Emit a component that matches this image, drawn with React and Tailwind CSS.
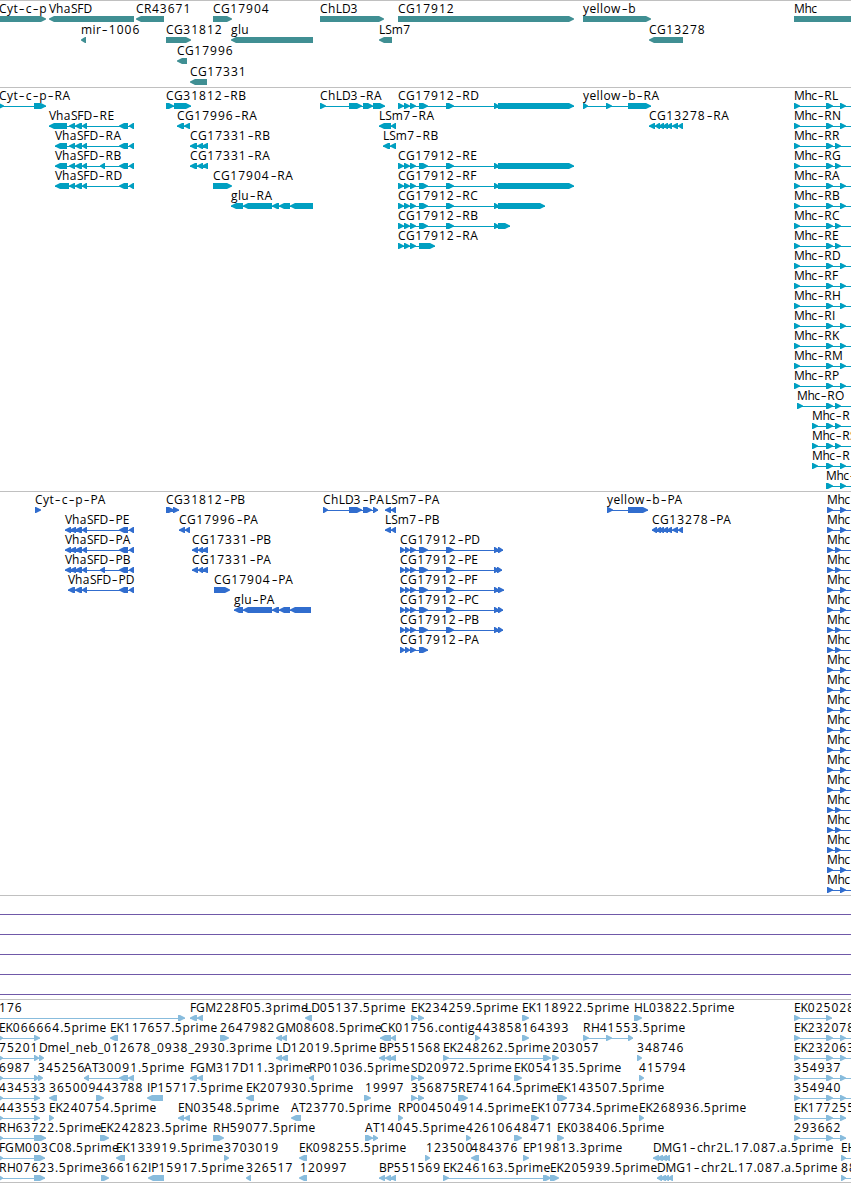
import clsx from "clsx";

// Feature: [label, x, strand, [[start, end], ...]]
// A block that starts past the right edge keeps the intron line running off screen.
const OFF = [900, 910];

const genes = [
  [
    ["Cyt-c-p", -1, "+", [[-20, 46]]],
    ["VhaSFD", 49, "-", [[49, 134]]],
    ["CR43671", 136, "-", [[136, 164]]],
    ["CG17904", 213, "+", [[213, 232]]],
    ["ChLD3", 320, "+", [[320, 384]]],
    ["CG17912", 398, "+", [[398, 574]]],
    ["yellow-b", 583, "+", [[583, 651]]],
    ["Mhc", 794, "+", [[794, 900]]],
  ],
  [
    ["mir-1006", 81, "-", [[81, 86]]],
    ["CG31812", 166, "+", [[166, 191]]],
    ["glu", 231, "-", [[231, 313]]],
    ["LSm7", 379, "-", [[379, 392]]],
    ["CG13278", 649, "-", [[649, 683]]],
  ],
  [["CG17996", 177, "-", [[177, 187]]]],
  [["CG17331", 190, "-", [[190, 207]]]],
];

const vhaTail = [[69, 75], [75, 82], [82, 87], [119, 128], [129, 134]];
const vhaTailB = [[69, 75], [75, 82], [82, 87], [100, 105], [119, 128], [129, 134]];
const cgHead = [[398, 404], [404, 410], [410, 416], [419, 428], [446, 454], [494, 499]];
const mhc = (name, x, third) => [name, x, "+", [[x, x + 6], [826, 833], [third, third + 6], OFF]];

const transcripts = [
  [
    ["Cyt-c-p-RA", -1, "+", [[-2, 4], [34, 46]]],
    ["CG31812-RB", 166, "+", [[166, 174], [174, 191]]],
    ["ChLD3-RA", 320, "+", [[320, 326], [349, 362], [363, 373], [373, 385]]],
    ["CG17912-RD", 398, "+", [...cgHead, [498, 574]]],
    ["yellow-b-RA", 583, "+", [[583, 588], [606, 612], [628, 651]]],
    mhc("Mhc-RL", 794, 840),
  ],
  [
    ["VhaSFD-RE", 49, "-", [[49, 67], ...vhaTail]],
    ["CG17996-RA", 177, "-", [[177, 184], [184, 190]]],
    ["LSm7-RA", 379, "-", [[379, 391], [391, 396]]],
    ["CG13278-RA", 649, "-", [[649, 655], [655, 660], [659, 664], [663, 668], [667, 672], [672, 678], [678, 683]]],
    mhc("Mhc-RN", 794, 840),
  ],
  [
    ["VhaSFD-RA", 55, "-", [[55, 67], ...vhaTail]],
    ["CG17331-RB", 190, "-", [[190, 197], [197, 203], [202, 208]]],
    ["LSm7-RB", 383, "-", [[383, 390], [390, 396]]],
    mhc("Mhc-RR", 794, 835),
  ],
  [
    ["VhaSFD-RB", 55, "-", [[55, 67], ...vhaTailB]],
    ["CG17331-RA", 190, "-", [[190, 197], [197, 203], [202, 208]]],
    ["CG17912-RE", 398, "+", [...cgHead, [498, 574]]],
    mhc("Mhc-RG", 794, 835),
  ],
  [
    ["VhaSFD-RD", 55, "-", [[55, 69], ...vhaTail]],
    ["CG17904-RA", 213, "+", [[213, 232]]],
    ["CG17912-RF", 398, "+", [...cgHead, [498, 574]]],
    mhc("Mhc-RA", 794, 840),
  ],
  [
    ["glu-RA", 231, "-", [[231, 243], [243, 272], [272, 279], [279, 290], [290, 313]]],
    ["CG17912-RC", 398, "+", [...cgHead, [498, 545]]],
    mhc("Mhc-RB", 794, 840),
  ],
  [["CG17912-RB", 398, "+", [...cgHead, [498, 510]]], mhc("Mhc-RC", 794, 835)],
  [
    ["CG17912-RA", 398, "+", [[398, 404], [404, 410], [410, 416], [419, 435]]],
    mhc("Mhc-RE", 794, 835),
  ],
  [mhc("Mhc-RD", 794, 840)],
  [mhc("Mhc-RF", 794, 840)],
  [mhc("Mhc-RH", 794, 840)],
  [mhc("Mhc-RI", 794, 840)],
  [mhc("Mhc-RK", 794, 840)],
  [mhc("Mhc-RM", 794, 840)],
  [mhc("Mhc-RP", 794, 840)],
  [mhc("Mhc-RO", 797, 835)],
  [mhc("Mhc-R", 812, 835)],
  [mhc("Mhc-RS", 812, 835)],
  [mhc("Mhc-R", 812, 840)],
  [["Mhc-", 826, "+", [[826, 833], [840, 846], OFF]]],
];

const vhaP = [[65, 71], [70, 76], [75, 82], [82, 87], [119, 128], [129, 134]];
const vhaPB = [[65, 71], [70, 76], [75, 82], [82, 87], [100, 105], [119, 128], [129, 134]];
const cgP = [[400, 405], [405, 410], [410, 416], [419, 428], [446, 454], [494, 499]];
const mhcP = (second) => ["Mhc", 827, "+", [[827, 833], [second, second + 6], OFF]];

const proteins = [
  [
    ["Cyt-c-p-PA", 35, "+", [[35, 41]]],
    ["CG31812-PB", 166, "+", [[166, 174], [173, 179]]],
    ["ChLD3-PA", 323, "+", [[323, 328], [349, 362], [363, 372], [373, 378]]],
    ["LSm7-PA", 385, "-", [[385, 391], [391, 396]]],
    ["yellow-b-PA", 607, "+", [[607, 613], [628, 648]]],
    mhcP(840),
  ],
  [
    ["VhaSFD-PE", 65, "-", vhaP],
    ["CG17996-PA", 179, "-", [[179, 185], [185, 190]]],
    ["LSm7-PB", 385, "-", [[385, 391], [391, 396]]],
    ["CG13278-PA", 652, "-", [[652, 657], [656, 661], [659, 664], [663, 668], [667, 672], [672, 678], [678, 683]]],
    mhcP(840),
  ],
  [
    ["VhaSFD-PA", 65, "-", vhaP],
    ["CG17331-PB", 192, "-", [[192, 198], [198, 203], [202, 208]]],
    ["CG17912-PD", 400, "+", [...cgP, [498, 503]]],
    mhcP(835),
  ],
  [
    ["VhaSFD-PB", 65, "-", vhaPB],
    ["CG17331-PA", 192, "-", [[192, 198], [198, 203], [202, 208]]],
    ["CG17912-PE", 400, "+", [...cgP, [497, 502]]],
    mhcP(835),
  ],
  [
    ["VhaSFD-PD", 68, "-", [[68, 75], ...vhaP.slice(2)]],
    ["CG17904-PA", 214, "+", [[214, 230]]],
    ["CG17912-PF", 400, "+", [...cgP, [498, 504]]],
    mhcP(840),
  ],
  [
    ["glu-PA", 234, "-", [[234, 243], [243, 272], [272, 279], [279, 290], [290, 311]]],
    ["CG17912-PC", 400, "+", [...cgP, [498, 503]]],
    mhcP(840),
  ],
  [["CG17912-PB", 400, "+", [...cgP, [498, 503]]], mhcP(835)],
  [["CG17912-PA", 400, "+", cgP.slice(0, 4)], mhcP(835)],
  ...[840, 840, 840, 840, 840, 840, 840, 835, 835, 835, 840, 840].map((x) => [mhcP(x)]),
];

const pair = [[411, 417], [418, 424]];
const three = [[794, 800], [826, 833], [840, 846]];

const ests = [
  [
    ["176", -1, "+", [[-20, -5], [178, 185]]],
    ["FGM228F05.3prime", 190, "-", [[190, 197], [197, 203]]],
    ["LD05137.5prime", 305, "-", [[305, 312]]],
    ["EK234259.5prime", 411, "+", pair],
    ["EK118922.5prime", 522, "+", [[522, 529]]],
    ["HL03822.5prime", 634, "+", [[634, 642]]],
    ["EK025028", 794, "+", [[794, 800], [826, 832]]],
  ],
  [
    ["EK066664.5prime", -1, "+", [[-2, 3], [34, 40]]],
    ["EK117657.5prime", 110, "-", [[110, 118]]],
    ["2647982", 220, "+", [[220, 229]]],
    ["GM08608.5prime", 276, "-", [[276, 282], [281, 287]]],
    ["CK01756.contig", 380, "-", [[380, 391], [391, 396]]],
    ["443858", 475, "+", [[475, 480]]],
    ["164393", 522, "+", [[522, 529]]],
    ["RH41553.5prime", 583, "+", [[583, 589], [606, 612], [628, 633]]],
    ["EK232078", 794, "+", [...three, OFF]],
  ],
  [
    ["75201", -1, "+", [[-2, 3], [34, 39]]],
    ["Dmel_neb_012678_0938_2930.3prime", 39, "+", [[39, 44]]],
    ["LD12019.5prime", 276, "-", [[276, 282], [281, 288]]],
    ["BP551568", 379, "-", [[379, 385], [385, 391], [390, 396]]],
    ["EK248262.5prime", 443, "+", [[443, 449], [543, 551]]],
    ["203057", 552, "+", [[552, 559]]],
    ["348746", 637, "+", [[637, 642]]],
    ["EK232063", 794, "+", [...three, OFF]],
  ],
  [
    ["6987", -1, "+", [[-2, 3], [34, 39]]],
    ["345256", 38, "+", [[38, 43]]],
    ["AT30091.5prime", 84, "-", [[84, 89], [119, 128], [128, 134]]],
    ["FGM317D11.3prime", 190, "-", [[190, 197], [197, 203]]],
    ["RP01036.5prime", 309, "-", [[309, 314]]],
    ["SD20972.5prime", 411, "+", pair],
    ["EK054135.5prime", 514, "+", [[514, 522]]],
    ["415794", 639, "+", [[639, 644]]],
    ["354937", 794, "+", [...three, OFF]],
  ],
  [
    ["434533", -1, "+", [[-2, 3], [34, 40]]],
    ["365009", 49, "-", [[49, 57]]],
    ["443788", 96, "+", [[96, 104]]],
    ["IP15717.5prime", 147, "-", [[147, 163]]],
    ["EK207930.5prime", 246, "-", [[246, 254]]],
    ["19997", 365, "+", [[364, 371]]],
    ["356875", 411, "+", pair],
    ["RE74164.5prime", 458, "+", [[458, 468]]],
    ["EK143507.5prime", 557, "+", [[557, 567]]],
    ["354940", 794, "+", [...three, OFF]],
  ],
  [
    ["443553", -1, "+", [[-2, 3], [34, 40]]],
    ["EK240754.5prime", 49, "+", [[49, 54]]],
    ["EN03548.5prime", 178, "-", [[178, 184], [184, 190]]],
    ["AT23770.5prime", 291, "-", [[291, 301]]],
    ["RP004504914.5prime", 398, "+", [[398, 403]]],
    ["EK107734.5prime", 531, "+", [[531, 539]]],
    ["EK268936.5prime", 639, "+", [[639, 644]]],
    ["EK177255", 794, "+", three],
  ],
  [
    ["RH63722.5prime", -1, "+", [[-2, 3], [34, 46]]],
    ["EK242823.5prime", 100, "+", [[100, 109]]],
    ["RH59077.5prime", 213, "+", [[213, 224]]],
    ["AT14045.5prime", 365, "+", [[365, 373], [373, 378]]],
    ["426106", 466, "+", [[466, 471]]],
    ["48471", 514, "+", [[514, 522]]],
    ["EK038406.5prime", 557, "+", [[557, 564]]],
    ["293662", 794, "+", three],
  ],
  [
    ["FGM003C08.5prime", -1, "+", [[-2, 3], [34, 45]]],
    ["EK133919.5prime", 116, "-", [[116, 125]]],
    ["3703019", 224, "+", [[224, 229]]],
    ["EK098255.5prime", 299, "-", [[299, 307]]],
    ["123500", 426, "+", [[425, 430]]],
    ["484376", 471, "-", [[471, 479]]],
    ["EP19813.3prime", 523, "+", [[523, 529]]],
    ["DMG1-chr2L.17.087.a.5prime", 653, "-", [[653, 659], [657, 663], [661, 667], [665, 670]]],
    ["EH", 841, "+", [[841, 846], OFF]],
  ],
  [
    ["RH07623.5prime", -1, "+", [[-2, 3], [34, 45]]],
    ["366162", 101, "+", [[101, 109]]],
    ["IP15917.5prime", 148, "-", [[148, 164]]],
    ["326517", 246, "-", [[246, 251]]],
    ["120997", 300, "-", [[299, 307]]],
    ["BP551569", 379, "-", [[379, 385], [385, 391], [390, 396]]],
    ["EK246163.5prime", 443, "+", [[443, 449], [543, 551]]],
    ["EK205939.5prime", 550, "+", [[550, 559]]],
    ["DMG1-chr2L.17.087.a.5prime", 657, "-", [[657, 662], [660, 666], [664, 669], [668, 673]]],
    ["88", 841, "+", [[841, 846], OFF]],
  ],
];

function blockPath([a, b], strand) {
  const head = Math.min(b - a, 6);
  if (strand === "+") {
    return `M${a} 0H${b - head + 1}L${b} 2.5V3.5L${b - head + 1} 6H${a}Z`;
  }
  return `M${b} 0H${a + head - 1}L${a} 2.5V3.5L${a + head - 1} 6H${b}Z`;
}

function Glyph({ strand, blocks }) {
  const first = blocks[0][0];
  const last = blocks[blocks.length - 1][1];
  return (
    <>
      {blocks.length > 1 && <rect x={first} y="3" width={last - first} height="1" />}
      <path d={blocks.map((block) => blockPath(block, strand)).join("")} />
    </>
  );
}

function pieceClass(piece) {
  if (piece === "-") return "inline-block w-[7.5px] scale-x-150 text-center";
  if (piece === "Mhc") return "tracking-[-0.4px]";
  if (/\d/.test(piece)) return "tracking-[1.02px]";
  if (piece === "_") return "tracking-[0.5px]";
  if (/[CGRA]/.test(piece)) return "tracking-[0.5px]";
  if (/[A-Z]/.test(piece)) return "tracking-[-0.1px]";
  return "tracking-[0.4px]";
}

function Label({ text, x }) {
  return (
    <span className="absolute top-0 whitespace-pre" style={{ left: x }}>
      {text.match(/Mhc|\d+|-|_|[CGRA]+|[BD-FH-QS-Z]+|[a-z.]+/g).map((piece, i) => (
        <span key={i} className={pieceClass(piece)}>
          {piece}
        </span>
      ))}
    </span>
  );
}

function Track({ rows, className, rowClass = "h-5" }) {
  return (
    <section className={clsx("flex flex-col border-t border-[#c0c0c0]", className)}>
      {rows.map((features, i) => (
        <div key={i} className={clsx("relative shrink-0 pt-[15px]", rowClass)}>
          <svg width="851" height="6" viewBox="0 0 851 6" className="block fill-current">
            {features.map(([label, , strand, blocks]) => (
              <Glyph key={label} strand={strand} blocks={blocks} />
            ))}
          </svg>
          <div className="text-black">
            {features.map(([label, x]) => (
              <Label key={label} text={label} x={x} />
            ))}
          </div>
        </div>
      ))}
    </section>
  );
}

export default function App() {
  return (
    <main className="flex h-[1183px] w-[851px] flex-col overflow-hidden bg-white font-['Open_Sans','Noto_Sans',sans-serif] text-xs leading-4">
      <Track rows={genes} rowClass="h-[21px]" className="h-[87px] text-[#408f93]" />
      <Track rows={transcripts} className="h-[404px] text-[#009fc1]" />
      <Track rows={proteins} className="h-[404px] text-[#316dce]" />
      <section className="flex h-[104px] flex-col gap-[19px] border-t border-[#c0c0c0] pt-[18px]">
        {[0, 1, 2, 3, 4].map((line) => (
          <div key={line} className="h-px bg-[#7059a8]" />
        ))}
      </section>
      <Track rows={ests} className="h-[184px] border-b text-[#88bcdd]" />
    </main>
  );
}
